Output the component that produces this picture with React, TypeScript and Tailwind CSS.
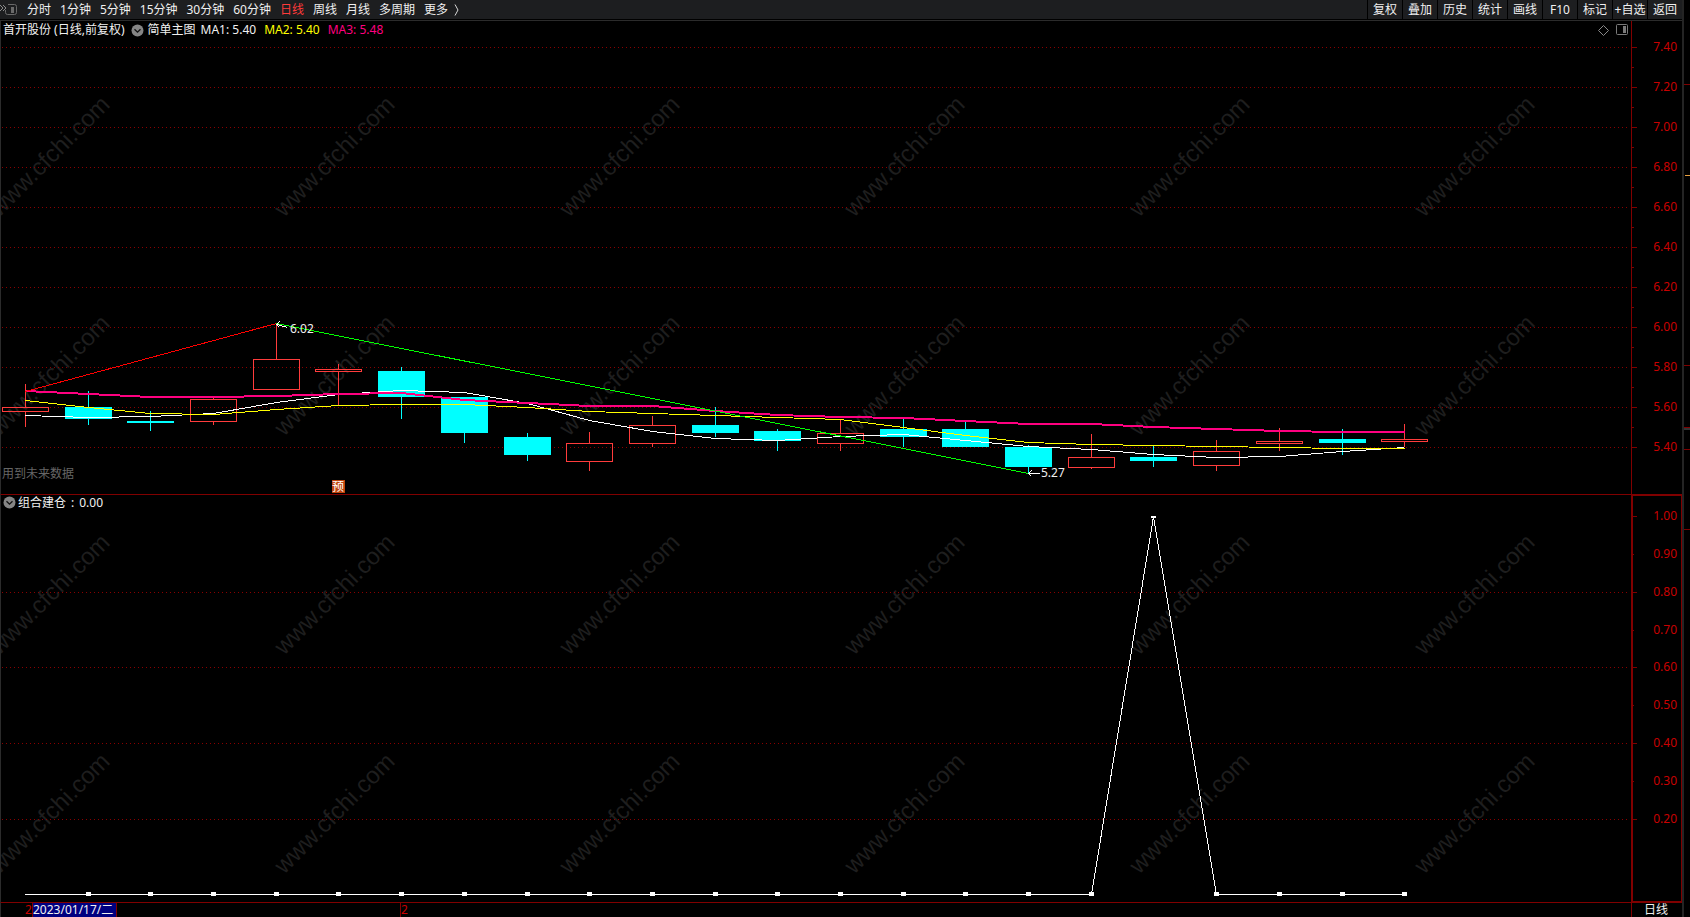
import React from "react";

const PERIODS = ["分时", "1分钟", "5分钟", "15分钟", "30分钟", "60分钟", "日线", "周线", "月线", "多周期"];
const TOOLS = ["复权", "叠加", "历史", "统计", "画线", "F10", "标记", "+自选", "返回"];

// Horizontal centre of every trading day
const DAYS = [
  25, 88, 150, 213, 276, 338, 401, 464, 527, 589, 652, 715, 777, 840, 903, 965, 1028, 1091, 1153, 1216, 1279, 1342,
  1404,
];

// [rising, high, body top, body bottom, low]
const CANDLES: [boolean, number, number, number, number][] = [
  [true, 384, 407, 412, 427],
  [false, 391, 407, 419, 425],
  [false, 411, 421, 423, 431],
  [true, 398, 399, 422, 425],
  [true, 323, 359, 390, 390],
  [true, 364, 369, 372, 405],
  [false, 367, 371, 397, 419],
  [false, 397, 397, 433, 443],
  [false, 433, 437, 455, 461],
  [true, 432, 443, 462, 471],
  [true, 416, 425, 444, 447],
  [false, 407, 425, 433, 437],
  [false, 429, 431, 441, 451],
  [true, 419, 433, 444, 451],
  [false, 418, 429, 437, 447],
  [false, 421, 429, 447, 447],
  [false, 445, 447, 467, 473],
  [true, 434, 457, 468, 469],
  [false, 446, 457, 461, 467],
  [true, 440, 451, 466, 471],
  [true, 428, 441, 444, 451],
  [false, 429, 439, 443, 455],
  [true, 424, 439, 442, 447],
];

const MA1 = [415, 417, 416, 413, 402, 394, 390, 392, 403, 420, 431, 438, 440, 436, 434, 440, 446, 449, 454, 457, 456, 451, 447];
const MA2 = [400, 407, 413, 414, 409, 405, 404, 404, 407, 411, 413, 415, 417, 419, 427, 435, 442, 444, 445, 446, 447, 448, 448];
const MA3 = [391, 394, 397, 397, 396, 394, 393, 400, 403, 406, 406, 411, 415, 417, 418, 421, 424, 424, 427, 429, 431, 432, 432];

const PRICES = ["7.40", "7.20", "7.00", "6.80", "6.60", "6.40", "6.20", "6.00", "5.80", "5.60", "5.40"];
const SIGNAL: [string, number][] = [
  ["1.00", 516],
  ["0.90", 554],
  ["0.80", 592],
  ["0.70", 630],
  ["0.60", 667],
  ["0.50", 705],
  ["0.40", 743],
  ["0.30", 781],
  ["0.20", 819],
];

const toPoints = (ys: number[]) => ys.map((y, i) => `${DAYS[i] + 0.5},${y + 0.5}`).join(" ");

function Fold({ label }: { label: string }) {
  return (
    <button type="button" aria-label={label} className="flex">
      <svg width="13" height="13" viewBox="0 0 13 13">
        <circle cx="6.5" cy="6.5" r="6" fill="#858585" />
        <path d="M3.5 5.2 6.5 8.2 9.5 5.2" fill="none" stroke="#111" strokeWidth="1.3" />
      </svg>
    </button>
  );
}

function GridLine({ y }: { y: number }) {
  return (
    <line x1="2" x2="100%" y1={y + 0.5} y2={y + 0.5} stroke="#8a0000" strokeDasharray="1 3" shapeRendering="crispEdges" />
  );
}

function Watermarks() {
  return (
    <svg className="pointer-events-none absolute inset-0 h-full w-full" aria-hidden="true">
      {[0, 1, 2, 3].map((row) =>
        [0, 1, 2, 3, 4, 5].map((col) => (
          <text
            key={`${row}-${col}`}
            transform={`translate(${-1 + col * 285} ${218 + row * 219}) rotate(-45)`}
            fontSize="24"
            fill="#1e1e1e"
            className="font-['Liberation_Sans',sans-serif]"
          >
            www.cfchi.com
          </text>
        )),
      )}
    </svg>
  );
}

function PriceChart() {
  return (
    <svg className="block h-[453px] w-full" fontSize="12" role="img" aria-label="日线">
      <g transform="translate(-1 -41)">
        {PRICES.map((p, i) => (
          <GridLine key={p} y={47 + i * 40} />
        ))}
        <g shapeRendering="crispEdges">
          {CANDLES.map(([up, high, top, bottom, low], i) => {
            const x = DAYS[i];
            return up ? (
              <g key={x} fill="none" stroke="#ff3c3c">
                <path d={`M${x + 0.5} ${high}V${top}M${x + 0.5} ${bottom}V${low}`} />
                <rect x={x - 22.5} y={top + 0.5} width="46" height={bottom - top - 1} />
              </g>
            ) : (
              <g key={x} fill="#00ffff">
                <rect x={x} y={high} width="1" height={low - high} />
                <rect x={x - 23} y={top} width="47" height={bottom - top} />
              </g>
            );
          })}
          <g fill="none">
            <polyline points={toPoints(MA1)} stroke="#ffffff" />
            <polyline points={toPoints(MA2)} stroke="#ffff00" />
            <polyline points={DAYS.map((x, i) => `${x + 0.5},${MA3[i]}`).join(" ")} stroke="#ff0080" strokeWidth="2" />
            <path d="M25.5 391.5 276.5 323.5" stroke="#ff0000" />
            <path d="M276.5 323.5 1028.5 473.5" stroke="#00ff00" />
            <path d="M277 324.5 287.5 327.5M279.5 321.5 277 324.5 279.5 327.5" stroke="#ffffff" />
            <path d="M1029 473.5H1039.5M1031.5 470.5 1028.5 473.5 1031.5 476.5" stroke="#ffffff" />
          </g>
        </g>
        <text x="290" y="333" fill="#f0f0f0">6.02</text>
        <text x="1041" y="477" fill="#f0f0f0">5.27</text>
        <text x="2" y="478" fill="#666666">用到未来数据</text>
        <rect x="332" y="480" width="13" height="13" fill="#c0440c" />
        <text x="332" y="491" fill="#ffffff">预</text>
      </g>
    </svg>
  );
}

function SignalChart() {
  return (
    <svg className="block h-[387px] w-full" role="img" aria-label="组合建仓">
      <g transform="translate(-1 -515)">
        {[592, 667, 743, 819].map((y) => (
          <GridLine key={y} y={y} />
        ))}
        <g shapeRendering="crispEdges">
          <path d="M25 894.5H1091.5L1153.5 516.5 1216.5 894.5H1405" fill="none" stroke="#ffffff" />
          {DAYS.slice(1).map((x) =>
            x === 1153 ? (
              <rect key={x} x={x - 2} y="516" width="5" height="2" fill="#ffffff" />
            ) : (
              <rect key={x} x={x - 2} y="892" width="5" height="4" fill="#ffffff" />
            ),
          )}
        </g>
      </g>
    </svg>
  );
}

export default function App() {
  return (
    <div className="relative isolate flex min-h-screen overflow-hidden bg-black font-['Noto_Sans','Noto_Sans_CJK_SC',sans-serif] text-[12px] leading-[14px] text-[#f0f0f0]">
      <div className="relative z-10 flex min-w-0 flex-1 flex-col">
        <header className="flex h-5 items-stretch justify-between border-b border-black bg-[#1d1e20] whitespace-nowrap">
          <nav className="flex items-center gap-[9px]">
            <button type="button" aria-label="侧栏" className="flex">
              <svg width="18" height="13" viewBox="0 0 18 13" fill="none" stroke="#8a8a8a">
                <path d="M0 2 3 5 0 8M3 2 6 5 3 8" />
                <path d="M8 1.5H14.5Q16.5 1.5 16.5 3.5V9.5Q16.5 11.5 14.5 11.5H7.5Q5.5 11.5 5.5 9.5V7" stroke="#6a6a6a" />
                <rect x="11" y="4" width="3" height="6" fill="#6a6a6a" stroke="none" />
              </svg>
            </button>
            {PERIODS.map((p) => (
              <button key={p} type="button" className={p === "日线" ? "text-[#ff3a3a]" : ""}>
                {p}
              </button>
            ))}
            <button type="button" className="flex items-center gap-[6px]">
              更多
              <svg width="5" height="12" viewBox="0 0 5 12" fill="none" stroke="#d8d8d8">
                <path d="M1 0.5 4 6 1 11.5" />
              </svg>
            </button>
          </nav>
          <div className="flex">
            {TOOLS.map((t) => (
              <button key={t} type="button" className="w-[35px] border-l border-black text-center">
                {t}
              </button>
            ))}
          </div>
        </header>

        <div className="flex border-t border-[#2b2b2b]">
          <section className="min-w-0 flex-1 border-l border-[#2b2b2b]">
            <div className="flex h-5 items-center pr-[3px] pb-[2px] pl-[2px] whitespace-nowrap">
              <h1>首开股份 (日线,前复权)</h1>
              <span className="ml-[6px] mr-1 flex">
                <Fold label="主图" />
              </span>
              <span>简单主图</span>
              <span className="ml-[5px]">MA1: 5.40</span>
              <span className="ml-2 text-[#ffff00]">MA2: 5.40</span>
              <span className="ml-2 text-[#ff0080]">MA3: 5.48</span>
              <span className="ml-auto flex items-center gap-[7px]">
                <button type="button" aria-label="标记点" className="flex">
                  <svg width="11" height="11" viewBox="0 0 11 11" fill="none" stroke="#8a8a8a">
                    <path d="M5.5 0.5 10.5 5.5 5.5 10.5 0.5 5.5Z" />
                  </svg>
                </button>
                <button type="button" aria-label="面板" className="flex">
                  <svg width="12" height="12" viewBox="0 0 12 12" fill="none" stroke="#7a7a7a">
                    <rect x="0.5" y="0.5" width="11" height="10" rx="1" />
                    <rect x="7" y="2" width="3" height="7" fill="#7a7a7a" stroke="none" />
                  </svg>
                </button>
              </span>
            </div>
            <PriceChart />
          </section>
          <svg className="block h-[473px] w-[51px]" fontSize="12" fill="#c80000">
            <g transform="translate(0 -21)">
              <rect x="0" y="21" width="1" height="473" fill="#800000" />
              {PRICES.map((p, i) => (
                <g key={p}>
                  <rect x="1" y={47 + i * 40} width="5" height="1" fill="#800000" />
                  {i < 10 && <rect x="1" y={67 + i * 40} width="2" height="1" fill="#800000" />}
                  <text x="46" y={51 + i * 40} textAnchor="end">
                    {p}
                  </text>
                </g>
              ))}
            </g>
          </svg>
        </div>

        <div className="flex">
          <section className="min-w-0 flex-1 border-t border-b border-l border-t-[#800000] border-b-[#800000] border-l-[#2b2b2b]">
            <div className="flex h-5 items-center pb-[5px] pl-[2px] whitespace-nowrap">
              <Fold label="组合建仓" />
              <h2 className="ml-[2px] flex gap-[5px]">
                <span>组合建仓</span>
                <span>:</span>
                <span>0.00</span>
              </h2>
            </div>
            <SignalChart />
          </section>
          <div className="w-[51px] border-2 border-r border-[#800000]">
            <svg className="block h-[405px] w-full" fontSize="12" fill="#c80000">
              <g transform="translate(-2 -496)">
                {SIGNAL.map(([label, y], i) => (
                  <g key={label}>
                    <rect x="2" y={y} width={i % 2 ? 1 : 4} height="1" fill="#800000" />
                    <text x="46" y={y + 4} textAnchor="end">
                      {label}
                    </text>
                  </g>
                ))}
              </g>
            </svg>
          </div>
        </div>

        <footer className="flex min-h-[14px] flex-1 whitespace-nowrap">
          <div className="flex min-w-0 flex-1 border-l border-[#2b2b2b] pl-6 text-[#c80000]">
            <span className="w-[7px]">2</span>
            <time className="w-[85px] border-x border-[#800000] bg-[#000080] text-[#f0f0f0]" dateTime="2023-01-17">
              2023/01/17/二
            </time>
            <span className="ml-[283px] border-l border-[#800000]">2</span>
          </div>
          <div className="w-[51px] border-l border-[#800000] pl-3">日线</div>
        </footer>
      </div>

      <div className="z-10 w-[2px] bg-[#242424]" />
      <svg className="z-10 block h-[600px] w-[6px]" aria-hidden="true">
        {[84, 365, 427, 449, 529].map((y) => (
          <rect key={y} x="0" y={y} width="6" height="1" fill="#800000" />
        ))}
        <rect x="0" y="428" width="6" height="2" fill="#333333" />
        <rect x="1" y="175" width="5" height="1" fill="#e8a040" />
      </svg>
      <Watermarks />
    </div>
  );
}
